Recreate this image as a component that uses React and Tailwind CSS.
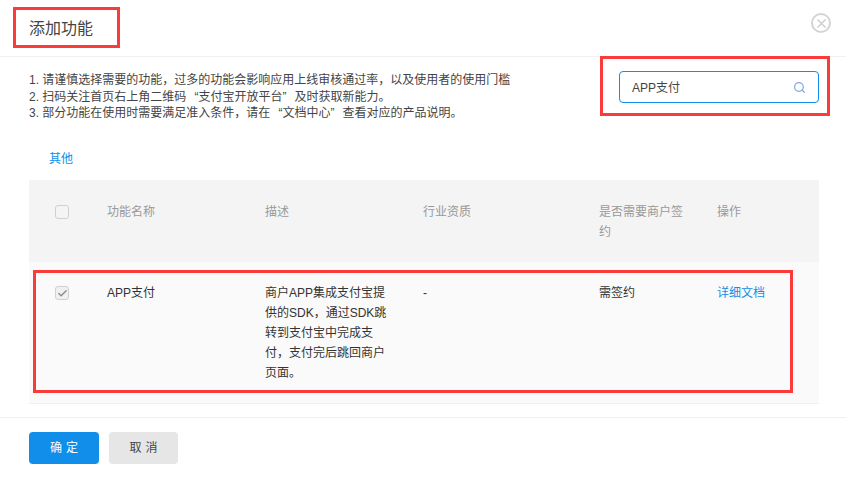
import { Search, Check, X } from 'lucide-react';

const font = { fontFamily: '"Liberation Sans", "Noto Sans CJK SC", sans-serif' };

function RedBox({ className }) {
  return <div className={`absolute border-[3px] border-[#fb3a3a] pointer-events-none ${className}`} />;
}

export default function App() {
  return (
    <div style={font} lang="zh-CN" className="relative w-[846px] h-[478px] overflow-hidden bg-white text-xs text-[#333]">
      <div className="h-[57px] border-b border-[#f0f0f0] flex items-center justify-between pl-[29px] pr-[15px]">
        <h1 className="text-base font-normal text-[#444] relative top-px">添加功能</h1>
        <div className="w-[20px] h-[20px] rounded-full border-2 border-[#d4d4d4] flex items-center justify-center relative -top-[5px]">
          <X size={15} strokeWidth={1.75} className="text-[#c8c8c8]" />
        </div>
      </div>

      <div className="flex justify-between pl-[29px] pr-[27px] h-[123px]">
        <div className="pt-[15px] leading-[16.7px] text-[#444]">
          <p>1. 请谨慎选择需要的功能，过多的功能会影响应用上线审核通过率，以及使用者的使用门槛</p>
          <p>2. 扫码关注首页右上角二维码 <span className="pl-[4.7px]">“</span>支付宝开放平台<span className="pr-[4.7px]">”</span> 及时获取新能力。</p>
          <p>3. 部分功能在使用时需要满足准入条件，请在 <span className="pl-[4.7px]">“</span>文档中心<span className="pr-[4.7px]">”</span> 查看对应的产品说明。</p>
          <p className="mt-[29px] pl-[20px] text-[#108ee9]">其他</p>
        </div>
        <div className="mt-[14px] w-[200px] h-[32px] border border-[#108ee9] rounded flex items-center justify-between pl-[12px] pr-[12px]">
          <span className="text-[#444] pt-[2px]">APP支付</span>
          <Search size={13} strokeWidth={2.25} className="text-[#7aa7e0]" />
        </div>
      </div>

      <div className="mx-[29px] w-[790px]">
        <div className="grid grid-cols-[78px_158px_158px_176px_118px_102px] h-[82px] bg-[#f4f4f4] text-[#999] leading-[20px] pt-[22px]">
          <div className="pl-[26px] pt-[3px]">
            <div className="w-[14px] h-[14px] border border-[#d0d0d0] rounded-[3px]" />
          </div>
          <div>功能名称</div>
          <div>描述</div>
          <div>行业资质</div>
          <div className="pr-[32px]">是否需要商户签约</div>
          <div>操作</div>
        </div>
        <div className="grid grid-cols-[78px_158px_158px_176px_118px_102px] h-[142px] bg-[#fafafa] border-b border-[#f0f0f0] leading-[20px] pt-[21px] text-[#333]">
          <div className="pl-[26px] pt-[3px]">
            <div className="w-[14px] h-[14px] border border-[#d0d0d0] bg-[#f0f0f0] rounded-[3px] flex items-center justify-center">
              <Check size={11} strokeWidth={3} className="text-[#8c8c8c]" />
            </div>
          </div>
          <div>APP支付</div>
          <div className="pr-[34px]">商户APP集成支付宝提供的SDK，通过SDK跳转到支付宝中完成支付，支付完后跳回商户页面。</div>
          <div>-</div>
          <div>需签约</div>
          <div className="text-[#108ee9]">详细文档</div>
        </div>
      </div>

      <div className="mt-[13px] border-t border-[#f0f0f0] pt-[14px] pl-[29px] flex gap-[10px]">
        <button className="w-[70px] h-[32px] pl-[4px] rounded bg-[#108ee9] text-white tracking-[4px]">确定</button>
        <button className="w-[69px] h-[32px] pl-[4px] rounded bg-[#e6e6e6] text-[#444] tracking-[4px]">取消</button>
      </div>

      <RedBox className="left-[13px] top-[7px] w-[107px] h-[41px]" />
      <RedBox className="left-[600px] top-[56px] w-[230px] h-[60px]" />
      <RedBox className="left-[33px] top-[270px] w-[760px] h-[123px]" />
    </div>
  );
}
